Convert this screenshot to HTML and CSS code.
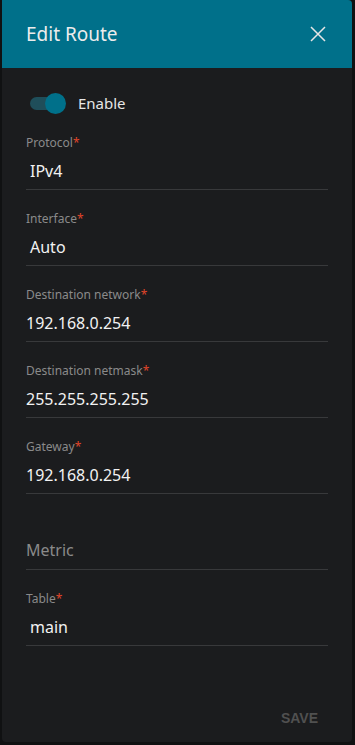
FILE: index.html
```html
<!DOCTYPE html>
<html lang="en">
<head>
    <meta charset="UTF-8">
    <meta name="viewport" content="width=device-width, initial-scale=1.0">
    <title>Edit Route</title>
    <link rel="stylesheet" href="styles.css">
</head>
<body>
    <div class="dialog">
        <div class="dialog-header">
            <h1>Edit Route</h1>
            <button class="close-btn" aria-label="Close">
                <svg width="16" height="16" viewBox="0 0 16 16">
                    <path d="M1 1 L15 15 M15 1 L1 15" stroke="#e6e6e6" stroke-width="1.5" fill="none"/>
                </svg>
            </button>
        </div>

        <div class="dialog-body">
            <div class="toggle-row">
                <span class="toggle"><span class="toggle-thumb"></span></span>
                <span class="toggle-label">Enable</span>
            </div>

            <div class="field">
                <label>Protocol<span class="req">*</span></label>
                <div class="value select">IPv4</div>
            </div>
            <div class="field">
                <label>Interface<span class="req">*</span></label>
                <div class="value select">Auto</div>
            </div>
            <div class="field">
                <label>Destination network<span class="req">*</span></label>
                <div class="value">192.168.0.254</div>
            </div>
            <div class="field">
                <label>Destination netmask<span class="req">*</span></label>
                <div class="value">255.255.255.255</div>
            </div>
            <div class="field">
                <label>Gateway<span class="req">*</span></label>
                <div class="value">192.168.0.254</div>
            </div>

            <div class="field placeholder-field">
                <div class="value placeholder">Metric</div>
            </div>
            <div class="field">
                <label>Table<span class="req">*</span></label>
                <div class="value select">main</div>
            </div>
        </div>

        <div class="dialog-footer">
            <button class="save-btn" disabled>SAVE</button>
        </div>
    </div>
</body>
</html>
```

FILE: styles.css
```css
body {
    margin: 0;
    padding: 0 3px 3px 2px;
    background-color: #101112;
    font-family: "Noto Sans", "Open Sans", Arial, sans-serif;
}
.dialog {
    width: 350px;
    height: 742px;
    background-color: #1b1c1e;
    border-radius: 0 4px 4px 4px;
    display: flex;
    flex-direction: column;
    overflow: hidden;
}
.dialog-header {
    height: 68px;
    flex-shrink: 0;
    background-color: #00708a;
    display: flex;
    align-items: center;
    justify-content: space-between;
    padding: 0 24px;
}
.dialog-header h1 {
    margin: 0;
    font-size: 19px;
    font-weight: normal;
    color: #ececec;
}
.close-btn {
    background: none;
    border: none;
    padding: 0;
    width: 16px;
    height: 16px;
    margin-right: 2px;
    cursor: pointer;
}
.close-btn svg {
    display: block;
}
.dialog-body {
    flex: 1;
    padding: 0 24px;
}
.toggle-row {
    display: flex;
    align-items: center;
    height: 30px;
    margin-top: 20px;
    margin-bottom: 17px;
}
.toggle {
    position: relative;
    width: 30px;
    height: 13px;
    margin-left: 4px;
    border-radius: 7px;
    background-color: #1f4e5a;
}
.toggle-thumb {
    position: absolute;
    right: -6px;
    top: -4px;
    width: 21px;
    height: 21px;
    border-radius: 50%;
    background-color: #00708a;
}
.toggle-label {
    margin-left: 18px;
    font-size: 15px;
    color: #e6e6e6;
}
.field {
    margin-bottom: 21px;
}
.field label {
    display: block;
    font-size: 12px;
    line-height: 16px;
    color: #8a8a8a;
}
.req {
    color: #e0452a;
}
.value {
    height: 35px;
    padding-top: 3px;
    line-height: 35px;
    font-size: 16px;
    color: #f2f2f2;
    border-bottom: 1px solid #38393b;
}
.value.select {
    padding-left: 4px;
}
.placeholder-field {
    margin-top: 37px;
}
.value.placeholder {
    padding-top: 0;
    height: 38px;
    line-height: 38px;
    color: #8a8a8a;
}
.dialog-footer {
    display: flex;
    justify-content: flex-end;
    padding: 0 34px 16px 0;
}
.save-btn {
    background: none;
    border: none;
    padding: 0;
    font-family: "Liberation Sans", Arial, sans-serif;
    font-size: 14px;
    font-weight: bold;
    color: #505050;
}
```
